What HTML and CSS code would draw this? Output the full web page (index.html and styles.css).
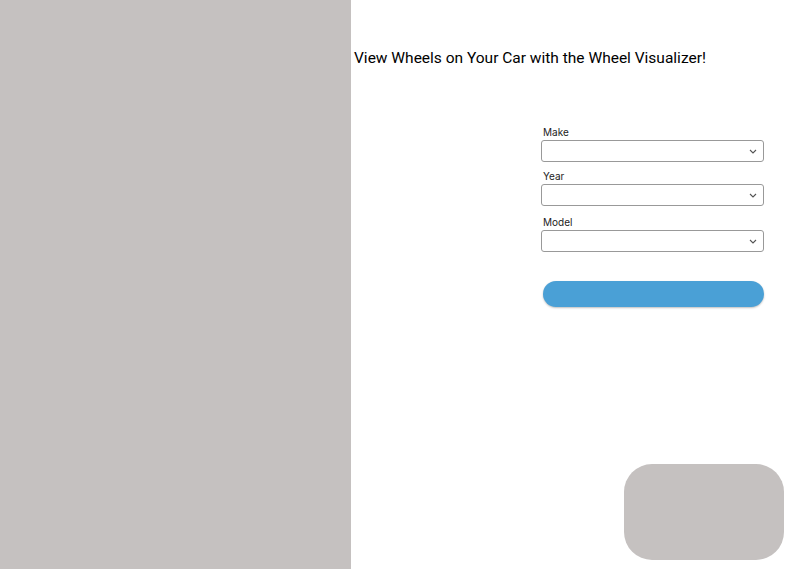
FILE: index.html
```html
<!DOCTYPE html>
<html lang="en">
<head>
    <meta charset="UTF-8">
    <meta name="viewport" content="width=device-width, initial-scale=1.0">
    <title>Wheel Visualizer</title>
    <link rel="stylesheet" href="styles.css">
</head>
<body>
    <div class="page">
        <div class="preview"></div>

        <div class="main">
            <h1>View Wheels on Your Car with the Wheel Visualizer!</h1>

            <form class="vehicle-form">
                <div class="form-group">
                    <label for="make">Make</label>
                    <select id="make"><option></option></select>
                </div>
                <div class="form-group">
                    <label for="year">Year</label>
                    <select id="year"><option></option></select>
                </div>
                <div class="form-group">
                    <label for="model">Model</label>
                    <select id="model"><option></option></select>
                </div>
                <button type="submit" class="submit"></button>
            </form>

            <div class="wheel-box"></div>
        </div>
    </div>
</body>
</html>
```

FILE: styles.css
```css
body {
    margin: 0;
    font-family: Inter, "Noto Sans", sans-serif;
    background: #fff;
}
.page {
    display: flex;
    height: 569px;
    overflow: hidden;
}
.preview {
    width: 351px;
    flex-shrink: 0;
    background-color: #c5c1c0;
}
.main {
    flex: 1;
    display: flex;
    flex-direction: column;
}
h1 {
    font-family: Roboto, sans-serif;
    font-weight: 400;
    font-size: 15.5px;
    line-height: 19px;
    margin: 49px 0 0 3px;
    color: #000;
}
.vehicle-form {
    align-self: flex-end;
    width: 223px;
    margin: 58px 36px 0 0;
    display: flex;
    flex-direction: column;
}
.form-group {
    display: flex;
    flex-direction: column;
    margin-bottom: 8px;
}
.form-group:nth-child(2) {
    margin-bottom: 10px;
}
.form-group:nth-child(3) {
    margin-bottom: 0;
}
.form-group label {
    font-size: 10px;
    color: #222;
    margin: 0 0 2px 2px;
    line-height: 12px;
}
select {
    appearance: none;
    height: 22px;
    border: 1px solid #999;
    border-radius: 3px;
    background: #fff url("data:image/svg+xml,%3Csvg xmlns='http://www.w3.org/2000/svg' width='8' height='5' viewBox='0 0 8 5'%3E%3Cpath d='M1 1l3 3 3-3' fill='none' stroke='%23555' stroke-width='1.1'/%3E%3C/svg%3E") no-repeat right 6px center;
}
.submit {
    margin: 29px 0 0 2px;
    height: 26px;
    width: 221px;
    border: none;
    border-radius: 13px;
    background-color: #4aa0d6;
    box-shadow: 0 1px 2px rgba(0, 0, 0, 0.25);
}
.wheel-box {
    align-self: flex-end;
    margin: 157px 16px 0 0;
    width: 160px;
    height: 96px;
    border-radius: 28px;
    background-color: #c5c1c0;
}
```
